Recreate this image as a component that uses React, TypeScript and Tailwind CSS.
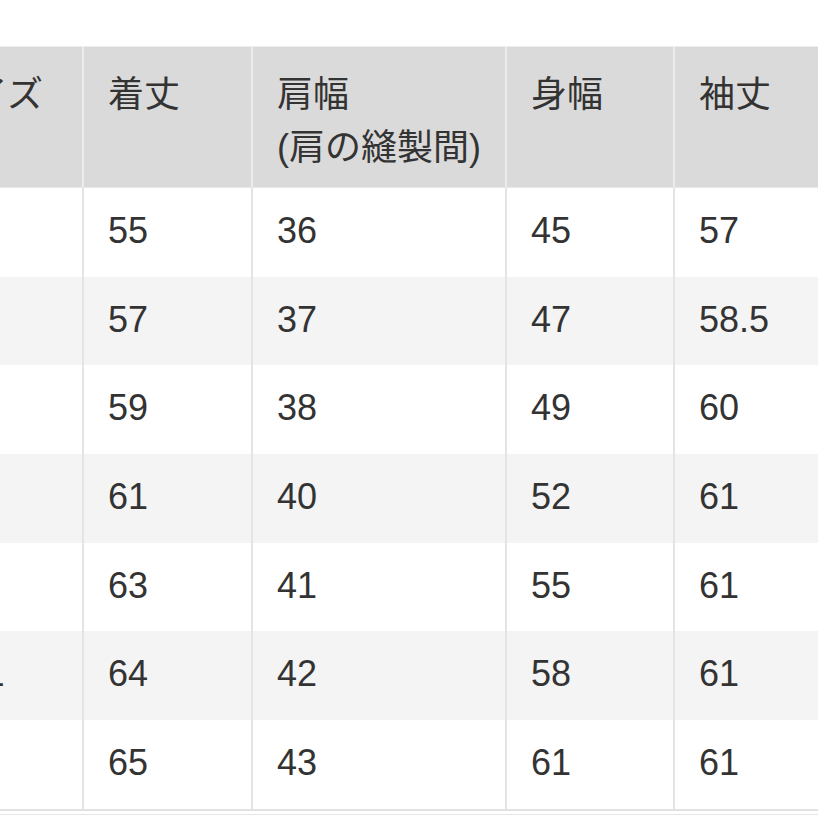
import React from "react";

const rows: string[][] = [
  ["XS", "55", "36", "45", "57"],
  ["S", "57", "37", "47", "58.5"],
  ["M", "59", "38", "49", "60"],
  ["L", "61", "40", "52", "61"],
  ["XL", "63", "41", "55", "61"],
  ["XXL", "64", "42", "58", "61"],
  ["3XL", "65", "43", "61", "61"],
];

const widths = ["w-[170px]", "w-[169px]", "w-[254px]", "w-[168px]", "w-[220px]"];

export default function App() {
  return (
    <div
      className="w-[818px] h-[818px] overflow-hidden bg-white text-[#333333]"
      style={{ fontFamily: '"Liberation Sans", "Noto Sans CJK JP", sans-serif' }}
    >
      <div className="ml-[-88px] pt-[46px]">
        <div className="border-t border-[#eeeeee]">
          {/* header */}
          <div className="flex h-[141px] bg-[#dadada] border-b border-[#e8e8e8]">
            {["サイズ", "着丈", "肩幅\n(肩の縫製間)", "身幅", "袖丈"].map((h, i) => (
              <div
                key={i}
                className={`${widths[i]} shrink-0 ${i > 0 ? "border-l-2 border-[#ececec]" : ""} pl-[24px] pt-[21px] text-[36px] leading-[53px] whitespace-pre-line`}
              >
                {h}
              </div>
            ))}
          </div>
          {/* body */}
          {rows.map((r, ri) => (
            <div
              key={ri}
              className={`flex h-[88.7px] ${ri % 2 === 1 ? "bg-[#f4f4f4]" : "bg-white"}`}
            >
              {r.map((c, ci) => (
                <div
                  key={ci}
                  className={`${widths[ci]} shrink-0 ${ci > 0 ? "border-l-2 border-[#e4e4e4]" : ""} pl-[24px] pb-[3px] flex items-center text-[36px] leading-none`}
                >
                  {c}
                </div>
              ))}
            </div>
          ))}
          <div className="h-[2px] bg-[#e2e2e2]" />
          <div className="h-[3px] bg-white" />
          <div className="h-px bg-[#e6e6e6]" />
        </div>
      </div>
    </div>
  );
}
